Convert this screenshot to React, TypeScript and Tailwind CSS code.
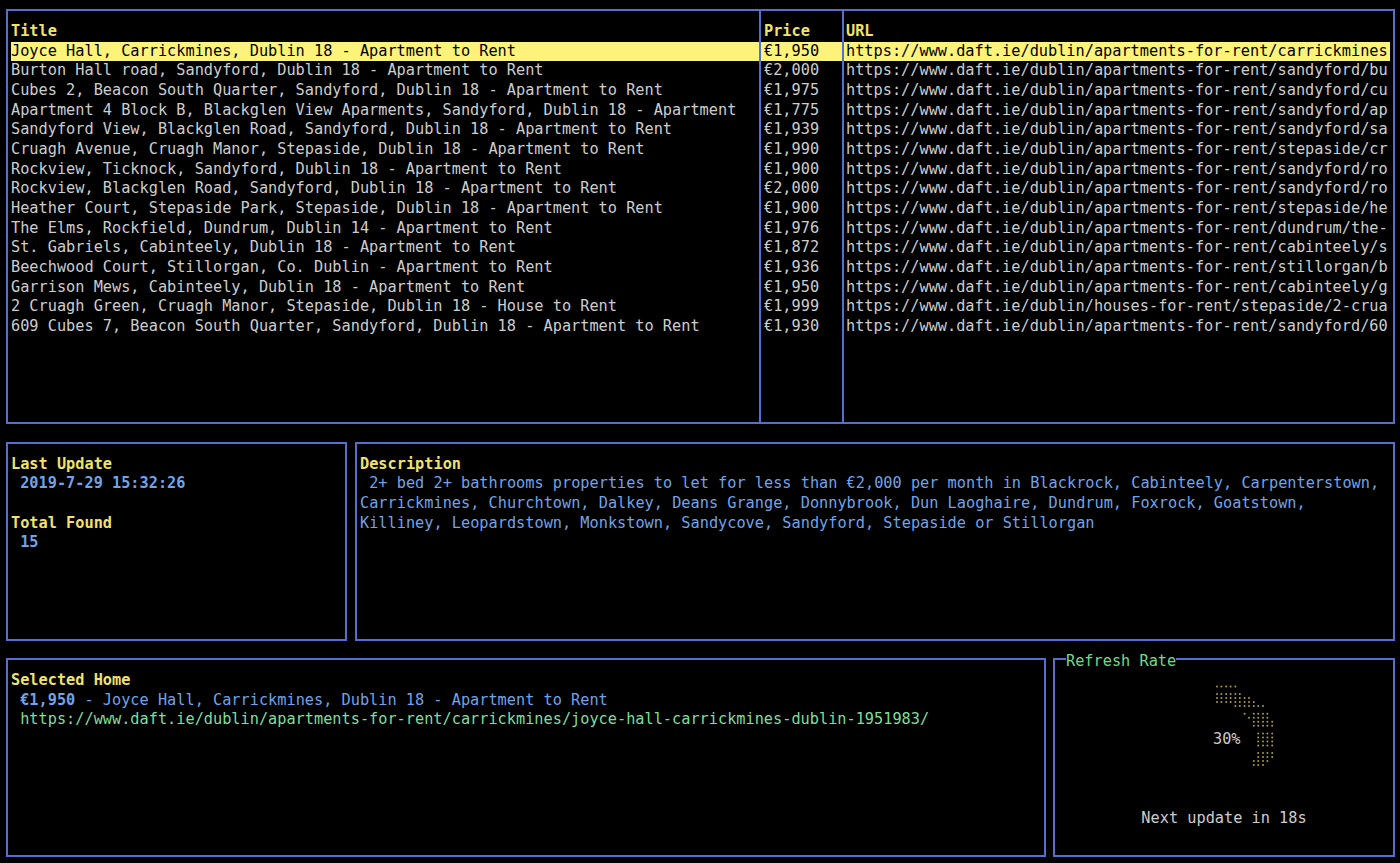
import React from "react";

type Listing = { title: string; price: string; url: string };

const LISTINGS: Listing[] = [
  { title: "Joyce Hall, Carrickmines, Dublin 18 - Apartment to Rent", price: "€1,950", url: "https://www.daft.ie/dublin/apartments-for-rent/carrickmines" },
  { title: "Burton Hall road, Sandyford, Dublin 18 - Apartment to Rent", price: "€2,000", url: "https://www.daft.ie/dublin/apartments-for-rent/sandyford/bu" },
  { title: "Cubes 2, Beacon South Quarter, Sandyford, Dublin 18 - Apartment to Rent", price: "€1,975", url: "https://www.daft.ie/dublin/apartments-for-rent/sandyford/cu" },
  { title: "Apartment 4 Block B, Blackglen View Aparments, Sandyford, Dublin 18 - Apartment", price: "€1,775", url: "https://www.daft.ie/dublin/apartments-for-rent/sandyford/ap" },
  { title: "Sandyford View, Blackglen Road, Sandyford, Dublin 18 - Apartment to Rent", price: "€1,939", url: "https://www.daft.ie/dublin/apartments-for-rent/sandyford/sa" },
  { title: "Cruagh Avenue, Cruagh Manor, Stepaside, Dublin 18 - Apartment to Rent", price: "€1,990", url: "https://www.daft.ie/dublin/apartments-for-rent/stepaside/cr" },
  { title: "Rockview, Ticknock, Sandyford, Dublin 18 - Apartment to Rent", price: "€1,900", url: "https://www.daft.ie/dublin/apartments-for-rent/sandyford/ro" },
  { title: "Rockview, Blackglen Road, Sandyford, Dublin 18 - Apartment to Rent", price: "€2,000", url: "https://www.daft.ie/dublin/apartments-for-rent/sandyford/ro" },
  { title: "Heather Court, Stepaside Park, Stepaside, Dublin 18 - Apartment to Rent", price: "€1,900", url: "https://www.daft.ie/dublin/apartments-for-rent/stepaside/he" },
  { title: "The Elms, Rockfield, Dundrum, Dublin 14 - Apartment to Rent", price: "€1,976", url: "https://www.daft.ie/dublin/apartments-for-rent/dundrum/the-" },
  { title: "St. Gabriels, Cabinteely, Dublin 18 - Apartment to Rent", price: "€1,872", url: "https://www.daft.ie/dublin/apartments-for-rent/cabinteely/s" },
  { title: "Beechwood Court, Stillorgan, Co. Dublin - Apartment to Rent", price: "€1,936", url: "https://www.daft.ie/dublin/apartments-for-rent/stillorgan/b" },
  { title: "Garrison Mews, Cabinteely, Dublin 18 - Apartment to Rent", price: "€1,950", url: "https://www.daft.ie/dublin/apartments-for-rent/cabinteely/g" },
  { title: "2 Cruagh Green, Cruagh Manor, Stepaside, Dublin 18 - House to Rent", price: "€1,999", url: "https://www.daft.ie/dublin/houses-for-rent/stepaside/2-crua" },
  { title: "609 Cubes 7, Beacon South Quarter, Sandyford, Dublin 18 - Apartment to Rent", price: "€1,930", url: "https://www.daft.ie/dublin/apartments-for-rent/sandyford/60" },
];

const SELECTED = 0;

// braille-ish arc of the refresh gauge: [terminal row, dot row, first dot col, last dot col]
const ARC: [number, number, number, number][] = [
  [34, 3, 0, 4],
  [35, 0, 0, 5],
  [35, 1, 0, 7],
  [35, 2, 0, 8],
  [35, 3, 4, 10],
  [36, 0, 6, 6],
  [36, 0, 8, 11],
  [36, 1, 7, 11],
  [36, 2, 8, 12],
  [36, 3, 8, 12],
  [37, 0, 9, 12],
  [37, 1, 9, 12],
  [37, 2, 9, 12],
  [37, 3, 9, 12],
  [38, 0, 9, 12],
  [38, 1, 9, 12],
  [38, 2, 8, 11],
  [38, 3, 8, 10],
];

const ROW_H = 19.67;

const dotX = (k: number) => 1217 + 9.2 * Math.floor(k / 2) + 4.4 * (k % 2);
const dotY = (row: number, d: number) => row * ROW_H + 5.9 + 4 * d;

const RefreshGauge = () => {
  const dots: { x: number; y: number }[] = [];
  ARC.forEach(([row, d, from, to]) => {
    for (let k = from; k <= to; k++) dots.push({ x: dotX(k), y: dotY(row, d) });
  });

  return (
    <div className="relative h-[137.7px]">
      <svg className="block" width="338" height="137.7" viewBox="1055 671.28 338 137.7">
        {dots.map((p, i) => (
          <circle key={i} cx={p.x} cy={p.y} r="1" fill="#ad9f22" />
        ))}
      </svg>
      <span className="absolute left-[158px] top-[59px] h-[19.67px] leading-[19.67px] text-[#cbcbcb]">30%</span>
    </div>
  );
};

export default function App() {
  return (
    <div className="h-[863px] w-[1400px] overflow-hidden bg-black pl-[6px] pt-[9.3px] font-['DejaVu_Sans_Mono',monospace] text-[15.25px] leading-[19.67px] text-[#cdcdcd]">
      {/* listings table */}
      <div className="flex h-[415px] w-[1389px] border-2 border-[#5270d0]">
        <div className="w-[751px] overflow-hidden pl-[3px] pt-[10.8px]">
          <div className="h-[19.67px] whitespace-pre font-bold text-[#f0e26a]">Title</div>
          {LISTINGS.map((l, i) => (
            <div
              key={i}
              className={
                i === SELECTED
                  ? "h-[19.67px] whitespace-pre bg-[#fdf37a] text-black"
                  : "h-[19.67px] whitespace-pre"
              }
            >
              {l.title}
            </div>
          ))}
        </div>
        <div className="w-[83px] overflow-hidden border-l-2 border-[#5270d0] pt-[10.8px]">
          <div className="h-[19.67px] whitespace-pre pl-[3px] font-bold text-[#f0e26a]">Price</div>
          {LISTINGS.map((l, i) => (
            <div
              key={i}
              className={
                i === SELECTED
                  ? "h-[19.67px] whitespace-pre bg-[#fdf37a] pl-[3px] text-black"
                  : "h-[19.67px] whitespace-pre pl-[3px]"
              }
            >
              {l.price}
            </div>
          ))}
        </div>
        <div className="flex-1 overflow-hidden border-l-2 border-[#5270d0] pr-[3px] pt-[10.8px]">
          <div className="h-[19.67px] whitespace-pre pl-[2px] font-bold text-[#f0e26a]">URL</div>
          {LISTINGS.map((l, i) => (
            <div
              key={i}
              className={
                i === SELECTED
                  ? "h-[19.67px] whitespace-pre bg-[#fdf37a] pl-[2px] text-black"
                  : "h-[19.67px] whitespace-pre pl-[2px]"
              }
            >
              {l.url}
            </div>
          ))}
        </div>
      </div>

      {/* status + description */}
      <div className="mt-[17.7px] flex h-[198.7px] gap-[8px]">
        <div className="w-[341px] border-2 border-[#5270d0] pl-[3px] pt-[10.8px]">
          <div className="h-[19.67px] font-bold text-[#f0e26a]">Last Update</div>
          <div className="h-[19.67px] whitespace-pre font-bold text-[#6fa3ea]"> 2019-7-29 15:32:26</div>
          <div className="h-[19.67px]" />
          <div className="h-[19.67px] font-bold text-[#f0e26a]">Total Found</div>
          <div className="h-[19.67px] whitespace-pre font-bold text-[#6fa3ea]"> 15</div>
        </div>
        <div className="w-[1040px] border-2 border-[#5270d0] pl-[3px] pt-[10.8px]">
          <div className="h-[19.67px] font-bold text-[#f0e26a]">Description</div>
          <div className="whitespace-pre text-[#6fa3ea]">
            <div className="h-[19.67px]"> 2+ bed 2+ bathrooms properties to let for less than €2,000 per month in Blackrock, Cabinteely, Carpenterstown,</div>
            <div className="h-[19.67px]">Carrickmines, Churchtown, Dalkey, Deans Grange, Donnybrook, Dun Laoghaire, Dundrum, Foxrock, Goatstown,</div>
            <div className="h-[19.67px]">Killiney, Leopardstown, Monkstown, Sandycove, Sandyford, Stepaside or Stillorgan</div>
          </div>
        </div>
      </div>

      {/* selected home + refresh */}
      <div className="mt-[17.7px] flex h-[198.7px] gap-[7px]">
        <div className="w-[1040px] border-2 border-[#5270d0] pl-[3px] pt-[10.8px]">
          <div className="h-[19.67px] font-bold text-[#f0e26a]">Selected Home</div>
          <div className="h-[19.67px] whitespace-pre text-[#6fa3ea]">
            {" "}
            <span className="font-bold">{LISTINGS[SELECTED].price}</span>
            {" - " + LISTINGS[SELECTED].title}
          </div>
          <div className="h-[19.67px] whitespace-pre text-[#7ddf97]">
            {" https://www.daft.ie/dublin/apartments-for-rent/carrickmines/joyce-hall-carrickmines-dublin-1951983/"}
          </div>
        </div>
        <div className="relative w-[342px] border-2 border-[#5270d0] pt-[10.8px]">
          <span className="absolute left-[11px] top-[-8.3px] h-[19.67px] bg-black leading-[19.67px] text-[#6fdc82]">
            Refresh Rate
          </span>
          <RefreshGauge />
          <div className="h-[19.67px] text-center">Next update in 18s</div>
        </div>
      </div>
    </div>
  );
}
